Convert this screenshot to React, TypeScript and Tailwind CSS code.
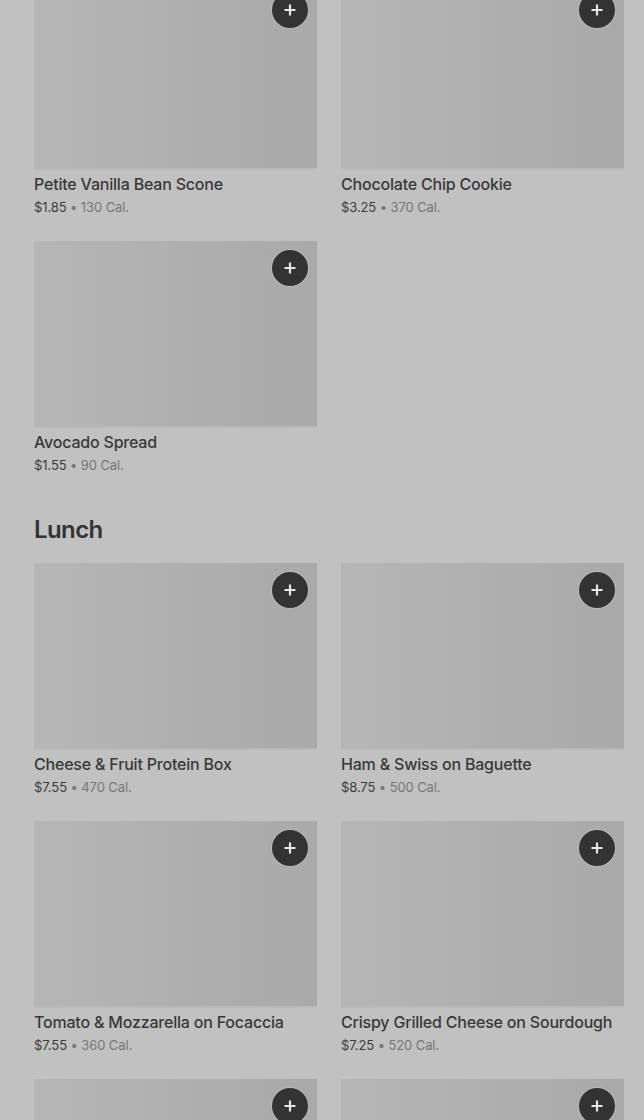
import React from "react";

type Item = { name?: string; price?: string; cal?: string };

function Card({ item }: { item: Item }) {
  return (
    <div className="flex flex-col">
      <div className="relative h-[187px] w-full bg-gradient-to-r from-[#b6b6b6] to-[#a9a9a9] border-b-2 border-[#b9b9b9]">
        <div className="absolute right-[9px] top-[9px] flex h-[36px] w-[36px] items-center justify-center rounded-full bg-[#333333] shadow-[0_0_0_1px_rgba(200,200,200,0.5)]">
          <svg width="14" height="14" viewBox="0 0 14 14" fill="none">
            <path d="M7 1.5v11M1.5 7h11" stroke="#e6e6e6" strokeWidth="2.2" />
          </svg>
        </div>
      </div>
      {item.name && (
        <>
          <div className="mt-[4px] text-[16px] leading-[20px] font-medium tracking-[-0.2px] text-[#393939] whitespace-nowrap">
            {item.name}
          </div>
          <div className="mt-[4px] text-[13px] leading-[18px] tracking-[-0.1px] whitespace-nowrap">
            <span className="text-[#3d3d3d]">{item.price}</span>
            <span className="text-[#777777]"> • {item.cal}</span>
          </div>
        </>
      )}
    </div>
  );
}

const top: Item[] = [
  { name: "Petite Vanilla Bean Scone", price: "$1.85", cal: "130 Cal." },
  { name: "Chocolate Chip Cookie", price: "$3.25", cal: "370 Cal." },
  { name: "Avocado Spread", price: "$1.55", cal: "90 Cal." },
];

const lunch: Item[] = [
  { name: "Cheese & Fruit Protein Box", price: "$7.55", cal: "470 Cal." },
  { name: "Ham & Swiss on Baguette", price: "$8.75", cal: "500 Cal." },
  { name: "Tomato & Mozzarella on Focaccia", price: "$7.55", cal: "360 Cal." },
  { name: "Crispy Grilled Cheese on Sourdough", price: "$7.25", cal: "520 Cal." },
  {},
  {},
];

export default function App() {
  return (
    <div
      className="h-[1120px] w-[644px] overflow-hidden bg-[#c1c1c1]"
      style={{ fontFamily: "Inter, 'Noto Sans', sans-serif" }}
    >
      <div className="-mt-[17px] pl-[34px] pr-[20px]">
        <div className="grid grid-cols-2 gap-x-[24px] gap-y-[25px]">
          {top.map((it, i) => (
            <Card key={i} item={it} />
          ))}
        </div>
        <h2 className="mt-[40px] text-[24px] leading-[32px] font-semibold tracking-[-0.6px] text-[#343434]">Lunch</h2>
        <div className="mt-[17px] grid grid-cols-2 gap-x-[24px] gap-y-[25px]">
          {lunch.map((it, i) => (
            <Card key={i} item={it} />
          ))}
        </div>
      </div>
    </div>
  );
}
